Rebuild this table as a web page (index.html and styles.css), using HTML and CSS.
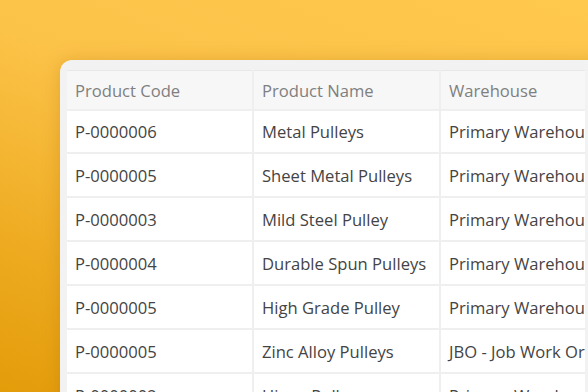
FILE: index.html
```html
<!DOCTYPE html>
<html>
<head>
<meta charset="utf-8">
<link rel="stylesheet" href="styles.css">
</head>
<body>
<div class="stage">
  <div class="card">
    <table class="grid">
      <colgroup>
        <col class="c1"><col class="c2"><col class="c3">
      </colgroup>
      <thead>
        <tr><th>Product Code</th><th>Product Name</th><th>Warehouse</th></tr>
      </thead>
      <tbody>
        <tr><td>P-0000006</td><td>Metal Pulleys</td><td>Primary Warehouse</td></tr>
        <tr><td>P-0000005</td><td>Sheet Metal Pulleys</td><td>Primary Warehouse</td></tr>
        <tr><td>P-0000003</td><td>Mild Steel Pulley</td><td>Primary Warehouse</td></tr>
        <tr><td>P-0000004</td><td>Durable Spun Pulleys</td><td>Primary Warehouse</td></tr>
        <tr><td>P-0000005</td><td>High Grade Pulley</td><td>Primary Warehouse</td></tr>
        <tr><td>P-0000005</td><td>Zinc Alloy Pulleys</td><td>JBO - Job Work Order</td></tr>
        <tr><td>P-0000002</td><td>Hinge Pulley</td><td>Primary Warehouse</td></tr>
      </tbody>
    </table>
  </div>
</div>
</body>
</html>
```

FILE: styles.css
```css
html, body {
  margin: 0;
  padding: 0;
  width: 588px;
  height: 392px;
  overflow: hidden;
}
body {
  background: linear-gradient(200deg, #ffc94d 0%, #fcc349 40%, #eeab21 75%, #e39c0a 100%);
  font-family: "Open Sans", "Noto Sans", sans-serif;
}
.stage {
  padding: 60px 0 0 60px;
}
.card {
  width: 560px;
  height: 360px;
  background: #f2f2f2;
  border-radius: 12px 12px 0 0;
  padding: 10px 0 0 7px;
  box-shadow: 0 0 18px rgba(170, 100, 0, 0.28);
  overflow: hidden;
}
.grid {
  border-collapse: collapse;
  table-layout: fixed;
  width: 518px;
  background: #ffffff;
}
.c1 { width: 186px; }
.c2 { width: 187px; }
.c3 { width: 145px; }
.grid th, .grid td {
  text-align: left;
  white-space: nowrap;
  overflow: hidden;
  padding: 0 0 0 8px;
  font-size: 16.6px;
  border-right: 2px solid #efefef;
  border-bottom: 2px solid #efefef;
}
.grid th:last-child, .grid td:last-child {
  border-right: none;
}
.grid th {
  height: 38px;
  font-weight: 400;
  color: #7f7f7f;
  background: #f7f7f7;
  border-top: 1px solid #e8e8e8;
}
.grid td {
  height: 42px;
  color: #444444;
}
.grid tbody tr:first-child td {
  height: 41px;
}
```
